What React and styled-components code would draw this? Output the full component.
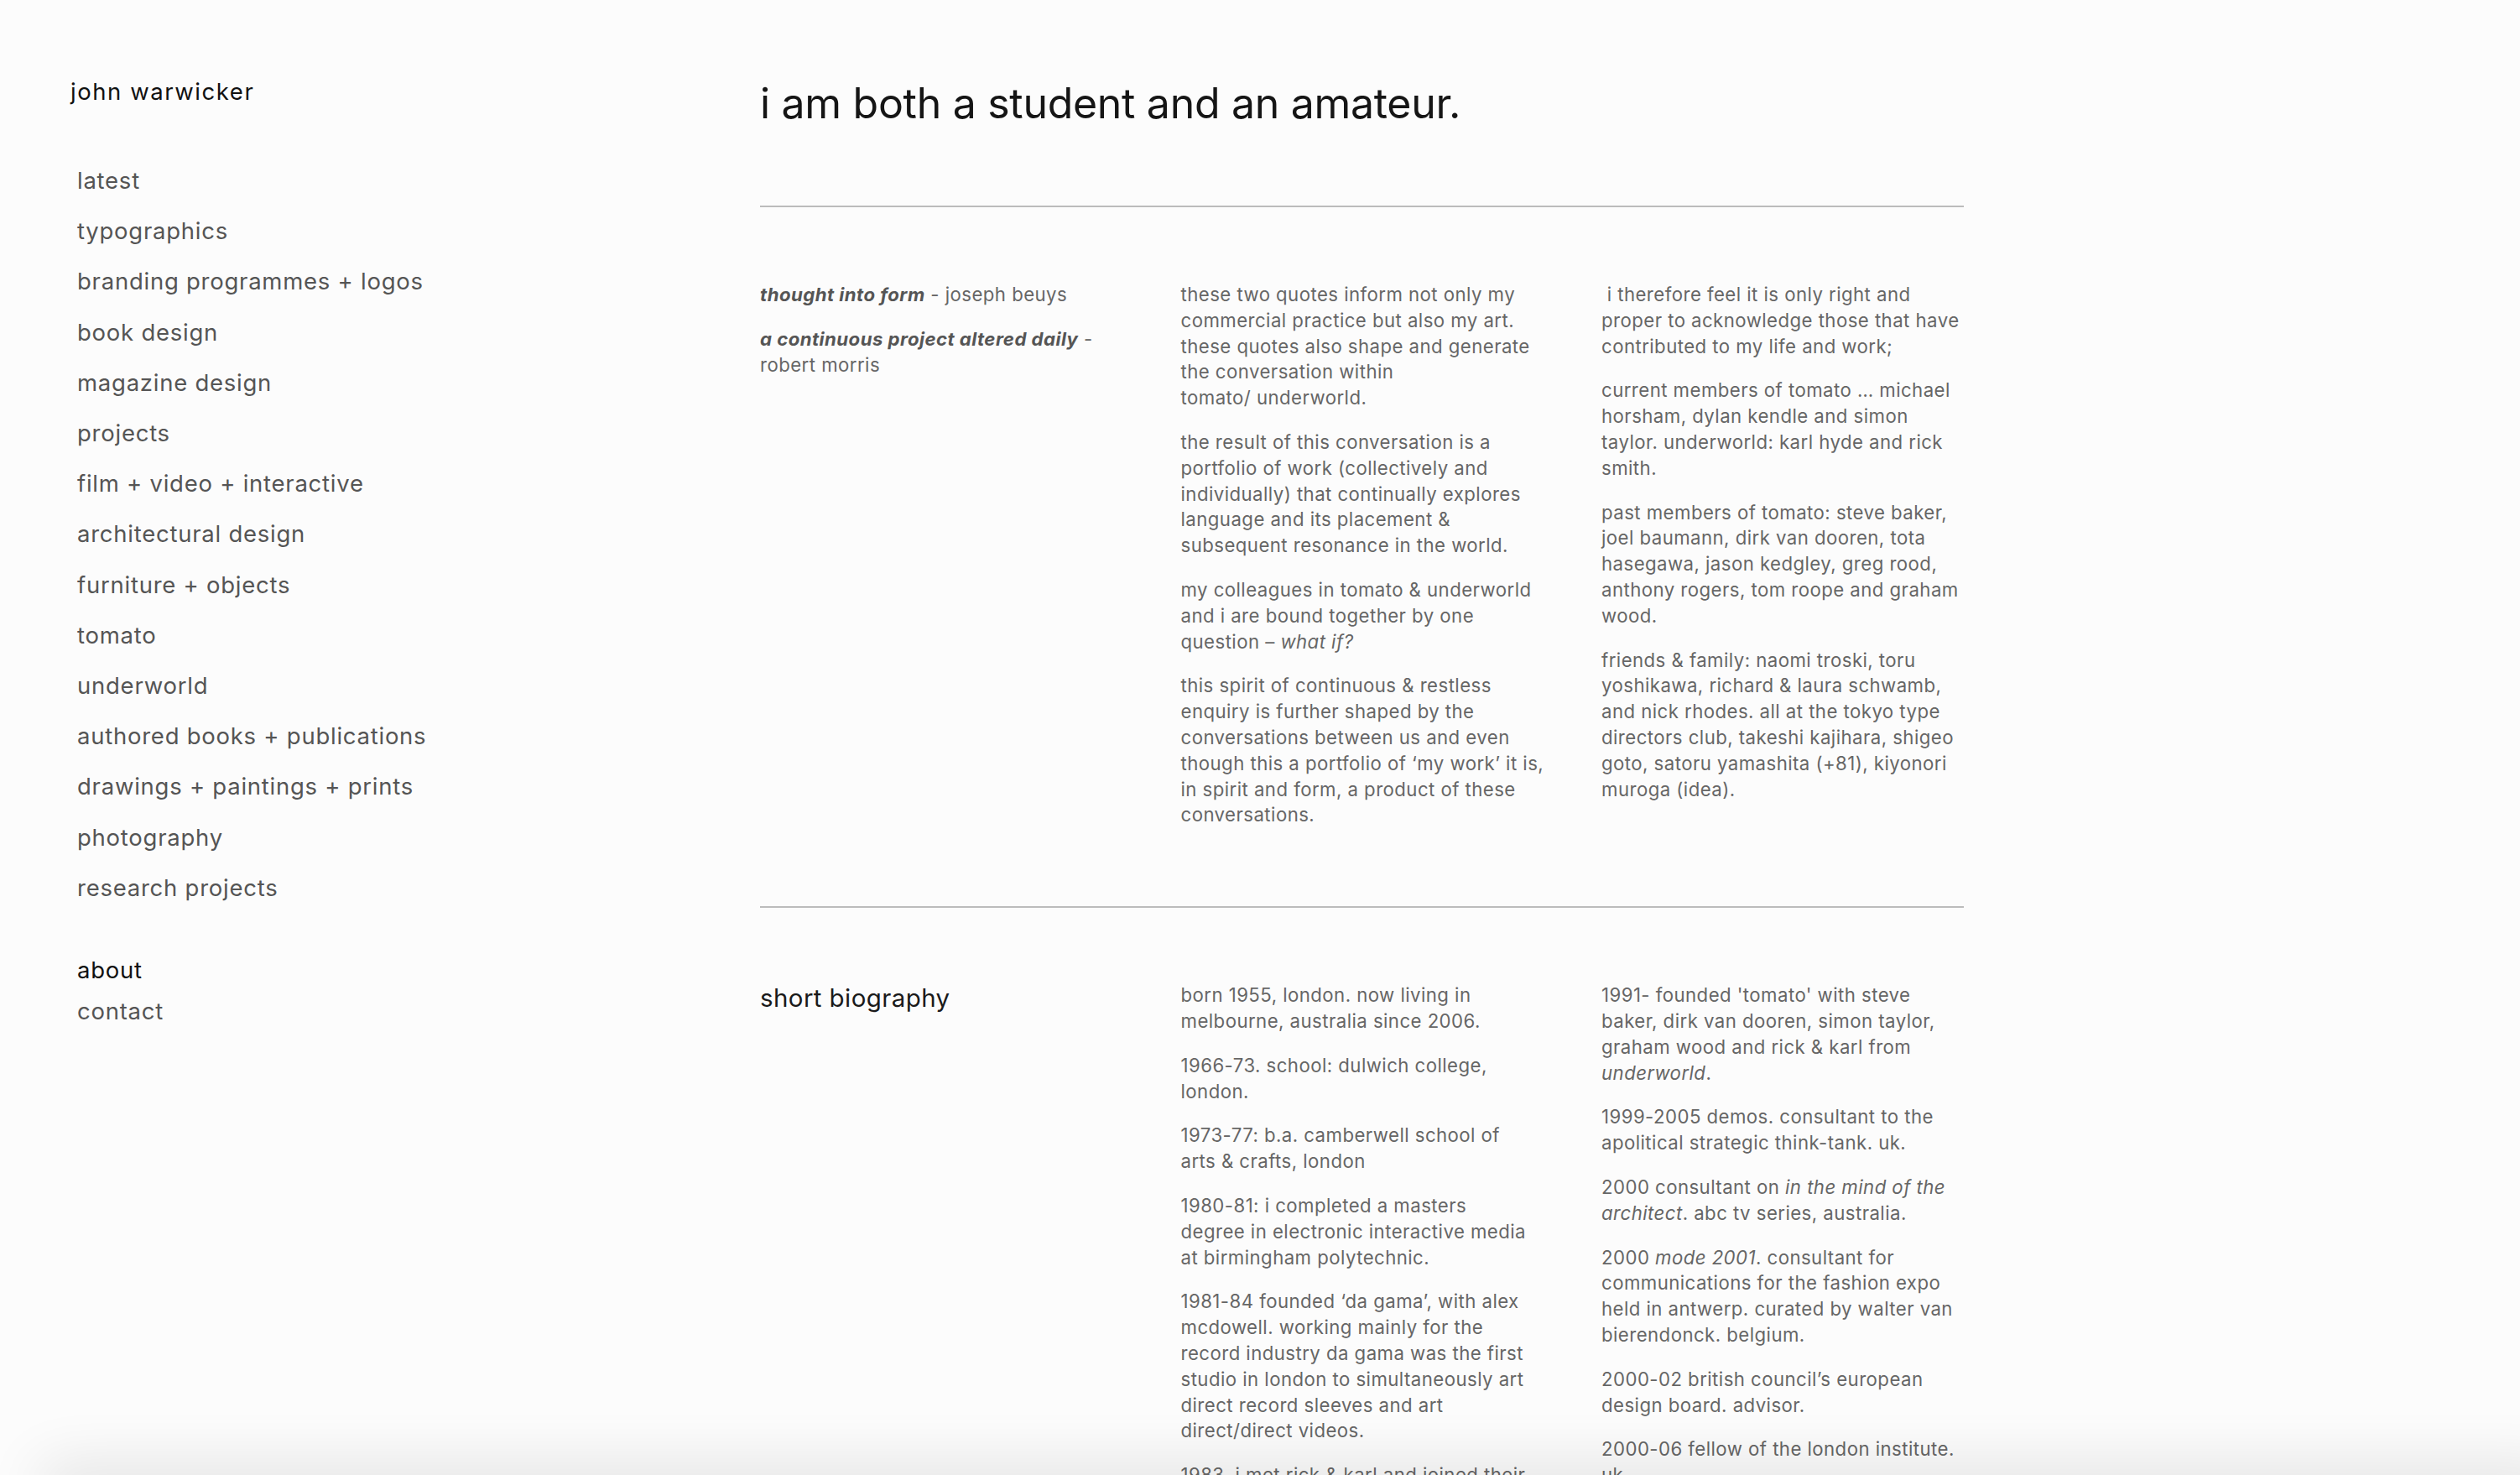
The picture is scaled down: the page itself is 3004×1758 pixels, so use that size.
import React from 'react';
import styled, { createGlobalStyle } from 'styled-components';

const GlobalStyle = createGlobalStyle`
  html, body {
    margin: 0;
    padding: 0;
    background: #fcfcfc;
  }
  body {
    font-family: Inter, "Noto Sans", "Liberation Sans", sans-serif;
    -webkit-font-smoothing: antialiased;
  }
`;

const navItems = [
  'latest',
  'typographics',
  'branding programmes + logos',
  'book design',
  'magazine design',
  'projects',
  'film + video + interactive',
  'architectural design',
  'furniture + objects',
  'tomato',
  'underworld',
  'authored books + publications',
  'drawings + paintings + prints',
  'photography',
  'research projects',
];

export default function App() {
  return (
    <>
      <GlobalStyle />
      <SPage>
        <SSidebar>
          <SName>john warwicker</SName>
          <SNav>
            {navItems.map((item) => (
              <SNavLink key={item}>{item}</SNavLink>
            ))}
          </SNav>
          <SSubNav>
            <SSubLink $active>about</SSubLink>
            <SSubLink>contact</SSubLink>
          </SSubNav>
        </SSidebar>

        <SMain>
          <STitle>i am both a student and an amateur.</STitle>
          <SRule />

          {/* line breaks follow the original layout of the page */}
          <SSection>
            <SColumn>
              <SText>
                <SQuote>thought into form</SQuote> - joseph beuys
              </SText>
              <SText>
                <SQuote>a continuous project altered daily</SQuote> -<br />
                robert morris
              </SText>
            </SColumn>
            <SColumn>
              <SText>
                these two quotes inform not only my<br />
                commercial practice but also my art.<br />
                these quotes also shape and generate<br />
                the conversation within<br />
                tomato/ underworld.
              </SText>
              <SText>
                the result of this conversation is a<br />
                portfolio of work (collectively and<br />
                individually) that continually explores<br />
                language and its placement &amp;<br />
                subsequent resonance in the world.
              </SText>
              <SText>
                my colleagues in tomato &amp; underworld<br />
                and i are bound together by one<br />
                question – <em>what if?</em>
              </SText>
              <SText>
                this spirit of continuous &amp; restless<br />
                enquiry is further shaped by the<br />
                conversations between us and even<br />
                though this a portfolio of ‘my work’ it is,<br />
                in spirit and form, a product of these<br />
                conversations.
              </SText>
            </SColumn>
            <SColumn>
              <SText>
                &nbsp;i therefore feel it is only right and<br />
                proper to acknowledge those that have<br />
                contributed to my life and work;
              </SText>
              <SText>
                current members of tomato … michael<br />
                horsham, dylan kendle and simon<br />
                taylor. underworld: karl hyde and rick<br />
                smith.
              </SText>
              <SText>
                past members of tomato: steve baker,<br />
                joel baumann, dirk van dooren, tota<br />
                hasegawa, jason kedgley, greg rood,<br />
                anthony rogers, tom roope and graham<br />
                wood.
              </SText>
              <SText>
                friends &amp; family: naomi troski, toru<br />
                yoshikawa, richard &amp; laura schwamb,<br />
                and nick rhodes. all at the tokyo type<br />
                directors club, takeshi kajihara, shigeo<br />
                goto, satoru yamashita (+81), kiyonori<br />
                muroga (idea).
              </SText>
            </SColumn>
          </SSection>

          <SRule />

          <SSection>
            <SColumn>
              <SSectionTitle>short biography</SSectionTitle>
            </SColumn>
            <SColumn>
              <SText>
                born 1955, london. now living in<br />
                melbourne, australia since 2006.
              </SText>
              <SText>
                1966-73. school: dulwich college,<br />
                london.
              </SText>
              <SText>
                1973-77: b.a. camberwell school of<br />
                arts &amp; crafts, london
              </SText>
              <SText>
                1980-81: i completed a masters<br />
                degree in electronic interactive media<br />
                at birmingham polytechnic.
              </SText>
              <SText>
                1981-84 founded ‘da gama’, with alex<br />
                mcdowell. working mainly for the<br />
                record industry da gama was the first<br />
                studio in london to simultaneously art<br />
                direct record sleeves and art<br />
                direct/direct videos.
              </SText>
              <SText>
                1983. i met rick &amp; karl and joined their<br />
                band freur.
              </SText>
            </SColumn>
            <SColumn>
              <SText>
                1991- founded 'tomato' with steve<br />
                baker, dirk van dooren, simon taylor,<br />
                graham wood and rick &amp; karl from<br />
                <em>underworld</em>.
              </SText>
              <SText>
                1999-2005 demos. consultant to the<br />
                apolitical strategic think-tank. uk.
              </SText>
              <SText>
                2000 consultant on <em>in the mind of the</em><br />
                <em>architect</em>. abc tv series, australia.
              </SText>
              <SText>
                2000 <em>mode 2001</em>. consultant for<br />
                communications for the fashion expo<br />
                held in antwerp. curated by walter van<br />
                bierendonck. belgium.
              </SText>
              <SText>
                2000-02 british council’s european<br />
                design board. advisor.
              </SText>
              <SText>
                2000-06 fellow of the london institute.<br />
                uk.
              </SText>
            </SColumn>
          </SSection>
        </SMain>
      </SPage>
      <SBottomShade />
    </>
  );
}

const SPage = styled.div`
  display: flex;
  align-items: flex-start;
  min-height: 100vh;
`;

const SSidebar = styled.aside`
  box-sizing: border-box;
  width: 906px;
  flex-shrink: 0;
  padding: 91px 0 0 84px;
`;

const SName = styled.div`
  font-size: 27.5px;
  line-height: 36px;
  letter-spacing: 1.55px;
  color: #111;
`;

const SNav = styled.nav`
  display: flex;
  flex-direction: column;
  margin-top: 58px;
  padding-left: 8px;
`;

const SNavLink = styled.a`
  font-size: 27.5px;
  line-height: 60.2px;
  letter-spacing: 0.75px;
  color: #555;
  white-space: nowrap;
  cursor: pointer;
`;

const SSubNav = styled.div`
  display: flex;
  flex-direction: column;
  margin-top: 44px;
  padding-left: 8px;
`;

const SSubLink = styled.a`
  font-size: 27.5px;
  line-height: 49px;
  letter-spacing: 0.75px;
  color: ${(p) => (p.$active ? '#111' : '#555')};
  cursor: pointer;
`;

const SMain = styled.main`
  width: 1435px;
  padding-top: 93px;
`;

const STitle = styled.h1`
  margin: 0 0 92px;
  font-size: 50px;
  line-height: 60px;
  letter-spacing: -0.3px;
  font-weight: 400;
  color: #151515;
`;

const SRule = styled.hr`
  margin: 0;
  border: 0;
  height: 2px;
  background: #bcbcbc;
`;

const SSection = styled.section`
  display: grid;
  grid-template-columns: repeat(3, 432px);
  column-gap: 69.5px;
  padding: 89px 0 93px;
`;

const SColumn = styled.div`
  display: flex;
  flex-direction: column;
  gap: 22px;
`;

const SText = styled.p`
  margin: 0;
  font-size: 22.2px;
  line-height: 30.8px;
  letter-spacing: 0.45px;
  white-space: nowrap;
  color: #666;
`;

const SQuote = styled.b`
  font-weight: 700;
  font-style: italic;
  color: #555;
`;

const SSectionTitle = styled.h2`
  margin: 0;
  font-size: 29.5px;
  line-height: 36px;
  letter-spacing: 0.4px;
  font-weight: 400;
  color: #1a1a1a;
`;

const SBottomShade = styled.div`
  position: fixed;
  left: 60px;
  right: -40px;
  bottom: -30px;
  height: 30px;
  box-shadow: 0 0 70px 10px rgba(0, 0, 0, 0.12);
  pointer-events: none;
`;
